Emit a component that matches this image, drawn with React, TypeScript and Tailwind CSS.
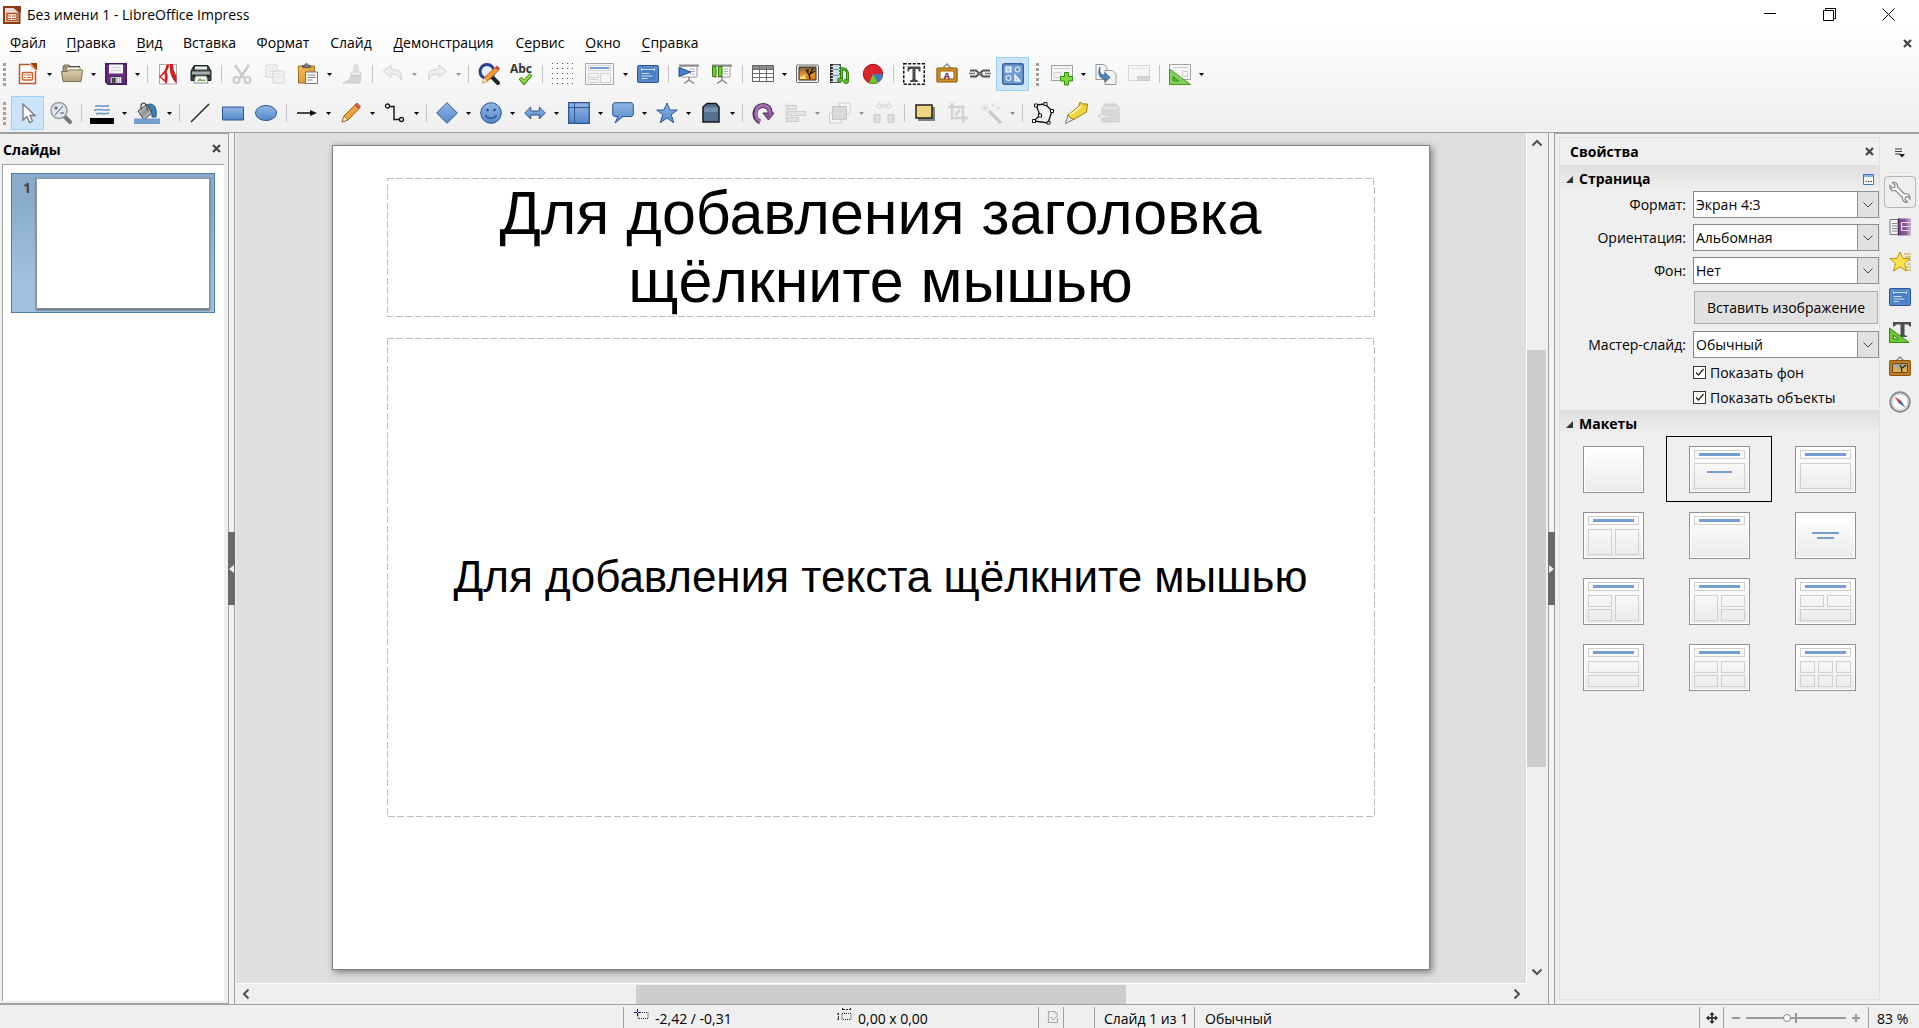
import clsx from "clsx"
import { useState } from "react"
import type { ReactNode } from "react"

type ToolItem = {
  icon?: string
  label?: string
  kind?: "button" | "sep" | "grip"
  menu?: boolean
  size?: "swatch" | "wide"
  active?: boolean
  disabled?: boolean
}

const menus = [
  { text: "Файл", key: 0, width: "w-14" },
  { text: "Правка", key: 0, width: "w-[70px]" },
  { text: "Вид", key: 0, width: "w-[47px]" },
  { text: "Вставка", key: 3, width: "w-[73px]" },
  { text: "Формат", key: 2, width: "w-[74px]" },
  { text: "Слайд", key: -1, width: "w-[62px]" },
  { text: "Демонстрация", key: 0, width: "w-[123px]" },
  { text: "Сервис", key: 1, width: "w-[70px]" },
  { text: "Окно", key: 0, width: "w-14" },
  { text: "Справка", key: 0, width: "w-[78px]" },
]

const icons: Record<string, ReactNode> = {
  newDoc: (
    <>
      <path d="M2.5 1.5h11l5 6v13h-16z" fill="#fff" stroke="#b5592f" strokeWidth="1.5" />
      <path d="M13.500 0H20v7.500z" fill="#a33e03" />
      <path d="M13 1.500v6h6" fill="#fbe3d5" stroke="#fff" />
      <rect x="5.500" y="9.500" width="10" height="7.500" rx="1" fill="#fff" stroke="#d0632a" strokeWidth="1.500" />
      <path d="M7 12h1.500M9.500 12H14M7 14.500h1.500M9.500 14.500H14" stroke="#d0632a" strokeWidth="1.200" />
    </>
  ),
  open: (
    <>
      <path d="M2 16V4l1-2h5l1 2h9v12z" fill="#a39473" stroke="#7f7150" />
      <path d="M6 4h13v8H6z" fill="#f5f5f2" stroke="#8d8468" />
      <path d="M8 3.500h11" stroke="#4a4a44" />
      <path d="M.5 8.500h6l2-1.500h13l-1.500 11.500H2z" fill="url(#tan)" stroke="#80724f" />
    </>
  ),
  save: (
    <>
      <path d="M.8.8h20.400v20.400H3L.8 19z" fill="#6a2b86" stroke="#43185a" strokeWidth="1.500" />
      <rect x="4" y="1.500" width="14" height="9" fill="#f7f7f7" />
      <path d="M6 4.500h10M6 7.500h10" stroke="#d4d4d4" strokeWidth="1.500" />
      <path d="M5 13.500h12v7H5z" fill="#b9bcb8" stroke="#4f2a62" />
      <path d="M7 15h3.500v5H7z" fill="#3f4a40" />
      <path d="M13.500 14v6M15.500 14v6" stroke="#eee" />
    </>
  ),
  pdf: (
    <>
      <path d="M2.500 1.500h17v19.500h-17z" fill="#fff" stroke="#a9a9a9" />
      <path d="M12.500 1c0 8 1.500 14 7 19.500V13C17 9 16 5 16 1z" fill="#cf1f20" />
      <path d="M9.500 1.500C9 5 8 7 6.500 9L3 13l4 .500c1 2 1.500 4 1.500 7h1.500c1-5 1-9-.500-12 1.500-2 2.500-4 2.500-7z" fill="#cf1f20" />
      <path d="M3 13.500 8.500 9v9.500z" fill="#fff" stroke="#d22" strokeWidth="1.500" />
    </>
  ),
  print: (
    <>
      <path d="M4 2.500h14l3 5.500v9.500H1V8z" fill="#3d4141" stroke="#212424" />
      <path d="M5 3.500h12v3H5z" fill="#e9eceb" />
      <path d="M2 8.500h18v3H2z" fill="#a9afaf" />
      <path d="M3 12h16v2H3z" fill="#151717" />
      <path d="M5.500 13h11l1.500 7H4z" fill="#f5f9f2" stroke="#858a85" />
      <path d="m7 18 3-3 2 2 2-1 2 2z" fill="#75ac56" />
    </>
  ),
  cut: (
    <>
      <path d="m4 2 9 13M18 2 9 15" stroke="#777" strokeWidth="2.500" />
      <circle cx="5.500" cy="17" r="3" fill="none" stroke="#777" strokeWidth="2" />
      <circle cx="16.500" cy="17" r="3" fill="none" stroke="#777" strokeWidth="2" />
    </>
  ),
  copy: (
    <>
      <path d="M2 2h11v12H2z" fill="#f1f1f1" stroke="#8c8c8c" />
      <path d="M4 5h7M4 8h7M4 11h4" stroke="#aaa" />
      <path d="M9 8h11v12H9z" fill="#f5f5f5" stroke="#8c8c8c" />
      <path d="M11 11h7M11 14h7M11 17h4" stroke="#999" />
    </>
  ),
  paste: (
    <>
      <path d="M1.500 3h16v17h-16z" fill="url(#orange)" stroke="#a86a15" />
      <path d="M5.500 4.500v-2h2C8 0 11 0 11.500 2.500h2v2z" fill="#7e7e7e" stroke="#555" />
      <path d="M8.500 9h12v11.500h-12z" fill="#fbfbfb" stroke="#777" />
      <path d="M10.500 12h8M10.500 14.500h8M10.500 17h5" stroke="#888" />
    </>
  ),
  brush: (
    <>
      <path d="M14 1.500c2-1 3 0 3 2v6h-4v-6z" fill="#bbb" stroke="#888" />
      <path d="M10 9h10v3.500H10z" fill="#d6d6d6" stroke="#888" />
      <path d="M10 12.500c0 4-4 6-8 7.500h17l1-7.500z" fill="#999" stroke="#777" />
    </>
  ),
  undo: <path d="M1.500 8 9 2v4c8 0 12 4 10 11-1-4-4-6-10-6v3.500z" fill="#ddd" stroke="#8a8a8a" />,
  redo: <path d="M20.500 8 13 2v4C5 6 1 10 3 17c1-4 4-6 10-6v3.500z" fill="#ddd" stroke="#8a8a8a" />,
  find: (
    <>
      <path d="m14 14 6 6" stroke="#222" strokeWidth="4" strokeLinecap="round" />
      <circle cx="9" cy="8.500" r="7" fill="#e6ecf5" stroke="#24408e" strokeWidth="3" />
      <path d="m4.500 20 1.500-5L17 4.500l3.500 3L9 18.500z" fill="#f29a31" stroke="#a35b0e" strokeWidth=".8" />
      <path d="m17 4.500 2-2 3 3-1.500 2z" fill="#e03c3c" />
      <path d="m4.500 20 1.500-5 3 3.500z" fill="#f4dcb5" />
    </>
  ),
  spell: (
    <>
      <text x="-1" y="10" fontSize="12" fontWeight="700" fontFamily="Open Sans, sans-serif" fill="#333">Abc</text>
      <path d="m9 15 4 4.500 7-8" fill="none" stroke="#3f8f10" strokeWidth="4" />
      <path d="m9.500 15.500 3.500 3.500 6.500-7" fill="none" stroke="#8ee04b" strokeWidth="2" />
    </>
  ),
  grid: <rect width="22" height="22" fill="url(#dots)" />,
  layout: (
    <>
      <path d="M.5.5h28v21H.5z" fill="#f5f5f5" stroke="#a8a8a8" />
      <path d="M3.500 2.500h22v5h-22zM3.500 10.500h10v4h-10zM15.500 10.500h10v9h-10zM3.500 16.500h10v3h-10z" fill="none" stroke="#d4d4d4" />
      <path d="M5 5h19" stroke="#729fcf" strokeWidth="2" />
    </>
  ),
  master: (
    <>
      <rect x=".5" y="2.500" width="21" height="17" rx="1" fill="#4a7fc4" stroke="#2b5693" />
      <path d="M2 4h18v14H2z" fill="none" stroke="#6f9bd4" strokeWidth=".8" />
      <path d="M4.500 6.500h13M4.500 5v3M17.500 5v3M4.500 10.500h8M4.500 13h11M4.500 15.500h6" stroke="#dbe8f8" strokeWidth=".9" />
    </>
  ),
  present: (
    <>
      <path d="M3 3h16v11H3z" fill="#fff" stroke="#9a9a9a" />
      <path d="M1 2.500h20" stroke="#888" strokeWidth="2" />
      <path d="M11 14v3l-5 3.500M11 17l5 3.500" fill="none" stroke="#888" strokeWidth="1.500" />
      <path d="M12 6h5M13 8.500h4M12 11h5" stroke="#aaa" />
      <path d="m1 4.500 12 4.500-12 4.500z" fill="#4b7fc5" stroke="#23508f" />
    </>
  ),
  presentFrom: (
    <>
      <path d="M3 3h16v11H3z" fill="#fff" stroke="#9a9a9a" />
      <path d="M1 2.500h20" stroke="#888" strokeWidth="2" />
      <path d="M11 14v3l-5 3.500M11 17l5 3.500" fill="none" stroke="#888" strokeWidth="1.500" />
      <path d="M13 6h4M13 8.500h4M13 11h4" stroke="#aaa" />
      <path d="M1.500 3.500H5v10H1.500zM7.500 3.500H11v10H7.500z" fill="#70d02f" stroke="#337d0b" />
    </>
  ),
  table: (
    <>
      <path d="M.5 2.500h21v16H.5z" fill="#fff" stroke="#606060" />
      <path d="M1 3h20v3.500H1z" fill="#8d8d8d" />
      <path d="M.5 6.500h21M.5 10.500h21M.5 14.500h21M7.500 2.500v16M14.500 2.500v16" stroke="#6d6d6d" />
    </>
  ),
  image: (
    <>
      <rect x=".5" y="2" width="22" height="17.500" rx="1" fill="#eee" stroke="#6c6c6c" />
      <path d="M3 4h17v13H3z" fill="url(#sunset)" stroke="#333" />
      <path d="m4 14 5-2 1 4H4z" fill="#ffe577" />
      <path d="M14 16c0-4-1-5-4-9M14 12c0-3 2-4 3-7M14 11l5-3M12 9V6" fill="none" stroke="#241707" strokeWidth="1.300" />
    </>
  ),
  media: (
    <>
      <path d="M1.500 1.500h10v18h-10z" fill="#cfdded" stroke="#555" />
      <path d="M2.500 1v19" stroke="#222" strokeWidth="2.500" strokeDasharray="2 1" />
      <path d="M11 1v12" stroke="#555" strokeWidth="1.500" strokeDasharray="2 1" />
      <path d="M4 6.500h6M4 12.500h6" stroke="#7e96b5" />
      <path d="M12.500 16.500v-11c3 0 6 2 6 5v7" fill="none" stroke="#2c8208" strokeWidth="3" />
      <path d="M12.500 16.500v-11c3 0 6 2 6 5v7" fill="none" stroke="#6bcf2d" />
      <ellipse cx="11" cy="17" rx="2.500" ry="2" fill="#5fc524" stroke="#2c8208" />
      <ellipse cx="17" cy="18.500" rx="2.500" ry="2" fill="#5fc524" stroke="#2c8208" />
    </>
  ),
  chart: (
    <>
      <circle cx="11" cy="11" r="9.700" fill="#d9252b" stroke="#a50f13" />
      <path d="M11 11h9.700a9.700 9.700 0 0 1-5 8.500z" fill="#4478c0" />
      <path d="m11 11 4.700 8.500a9.700 9.700 0 0 1-8.700.5z" fill="#6cc52f" />
    </>
  ),
  textBox: (
    <>
      <rect x=".75" y=".75" width="20.500" height="20.500" fill="#fff" stroke="#111" strokeWidth="1.500" strokeDasharray="3 1.500" />
      <path d="M4.500 3.500h13v5H16L15 6h-2.500v10.500l2.500 1v1.500H7v-1.500l2.500-1V6H7L6 8.500H4.500z" fill="#454a4b" />
    </>
  ),
  fontwork: (
    <>
      <path d="m7 5 4-4 4 4" fill="none" stroke="#888" strokeWidth="1.300" />
      <rect x="1" y="5" width="20" height="14" rx="1" fill="#d3912b" stroke="#8b5606" strokeWidth="1.200" />
      <path d="M4 8h14v8H4z" fill="#fff" stroke="#99600c" />
      <text x="7.500" y="15.500" fontSize="9.500" fontWeight="700" fontFamily="Open Sans, sans-serif" fill="#5c3566">A</text>
    </>
  ),
  chain: (
    <>
      <path d="M1 7.500h6l3.500 3 3.500-3h7M1 13.500h6l3.500-3 3.500 3h7" fill="none" stroke="#4c4f50" strokeWidth="1.800" />
      <path d="M0 10.500h6M8 10.500h6M16 10.500h6" stroke="#777" strokeWidth="1.500" />
      <path d="M1 6.500h5M15 6.500h5M1 14.800h5M15 14.800h5" stroke="#b5b5b5" />
    </>
  ),
  shapes: (
    <>
      <rect x=".7" y=".7" width="20.600" height="20.600" rx="2" fill="#6e9bd3" stroke="#3464a6" strokeWidth="1.400" />
      <path d="M4 4h5v5H4zM13 12v6h5z" fill="#aac8ec" stroke="#fff" strokeWidth="1.200" />
      <circle cx="15.500" cy="6.500" r="2.500" fill="none" stroke="#fff" />
      <circle cx="6.500" cy="15" r="2.500" fill="none" stroke="#fff" />
    </>
  ),
  addSlide: (
    <>
      <path d="M.5 2.500h21v15H.5z" fill="#f4f4f4" stroke="#a0a0a0" />
      <path d="M3 5.500h16M3 9.500h7v5H3z" fill="none" stroke="#d0d0d0" />
      <path d="M13.500 9.500h4v4h4V18h-4v4h-4v-4h-4v-4.500h4z" fill="#7fda3a" stroke="#2f8b0b" />
    </>
  ),
  dupSlide: (
    <>
      <path d="M1 1.500h8l3 3v12H1z" fill="#f5f5f5" stroke="#999" />
      <path d="M10 7.500h7.500l3.500 3.500v10.500H10z" fill="#f5f5f5" stroke="#999" />
      <path d="M5 4c-1 6 1 8 5 8V9.500l5 5-5 4.500v-3C5 16 2 11 5 4z" fill="#4d87b9" stroke="#275e8c" strokeWidth=".8" />
    </>
  ),
  delSlide: (
    <>
      <path d="M.5 2.500h21v15H.5z" fill="#f4f4f4" stroke="#999" />
      <path d="M3 5.500h16" stroke="#bbb" />
      <path d="M9.500 13.500h12v4h-12z" fill="#999" stroke="#777" />
    </>
  ),
  slideLayout: (
    <>
      <path d="M.5 1.500h21v15H.5z" fill="#f6f6f6" stroke="#a0a0a0" />
      <path d="M4 4.500h15M13.500 8.500h5v5h-5z" fill="none" stroke="#ccc" />
      <path d="M.5 6v15.500h21z" fill="#85cf5d" stroke="#3f9a18" />
      <path d="M4 13.500V18h6z" fill="#55ad2b" stroke="#3f9a18" />
    </>
  ),
  cursor: <path d="M6 2v16l4-3.500 2.500 6 3-1.500-2.500-5.500h5z" fill="#fff" stroke="#777" strokeWidth="1.300" />,
  zoomPan: (
    <>
      <path d="m14 14 6 6" stroke="#777" strokeWidth="4" strokeLinecap="round" />
      <circle cx="9" cy="8.500" r="8" fill="#dfe7f2" stroke="#999" strokeWidth="1.500" />
      <path d="M4 6h4M6 4v4M10 11h4M5 13l8-9" stroke="#556" />
    </>
  ),
  lineColor: (
    <>
      <path d="M4 4.500c4-2.500 7 1.500 14-1M3 8.500c5-3 8 1 16-1M5 12c4-2 7 1 13-1" fill="none" stroke="#6d97c6" strokeWidth="1.600" />
      <path d="M-1 16h24v6H-1z" fill="#000" />
    </>
  ),
  fillColor: (
    <>
      <path d="M13 2c6 0 8 4 7 13h-4c0-5 0-8-5-9z" fill="#3c82b4" stroke="#1d5a88" />
      <path d="m2 9 9-7 5 9-8 7z" fill="url(#silver)" stroke="#444" />
      <path d="M5 8V4c0-3 4-4 5-1l2 6" fill="none" stroke="#555" strokeWidth="1.300" />
      <path d="M-2 16.500h26V22H-2z" fill="#729fcf" />
    </>
  ),
  line: <path d="M2 20 20 2" stroke="#222" strokeWidth="1.400" />,
  rect: <path d="M.5 5h21v13H.5z" fill="url(#blue)" stroke="#2b5693" />,
  ellipse: <ellipse cx="11" cy="11" rx="10.500" ry="7.500" fill="url(#blue)" stroke="#2b5693" />,
  arrow: (
    <>
      <path d="M1 11h14" stroke="#111" strokeWidth="1.500" />
      <path d="m14 8 7 3-7 3z" fill="#111" />
    </>
  ),
  pencil: (
    <>
      <path d="m2 20 2-6L15 3l4 3.500L8 18z" fill="#f2a33c" stroke="#9e5b10" />
      <path d="m15 3 2-2 3.500 3.500L19 6.500z" fill="#e25a55" stroke="#9b2d2d" strokeWidth=".7" />
      <path d="m2 20 2-6 4 4z" fill="#f7dfbc" stroke="#7c5a2d" strokeWidth=".6" />
    </>
  ),
  connector: (
    <>
      <path d="M5 4.500h5v13h6" fill="none" stroke="#111" strokeWidth="1.400" />
      <circle cx="3.500" cy="4" r="2" fill="#fff" stroke="#111" strokeWidth="1.300" />
      <circle cx="17.500" cy="17.500" r="2" fill="#fff" stroke="#111" strokeWidth="1.300" />
    </>
  ),
  diamond: <path d="M11 .7 21.300 11 11 21.300.7 11z" fill="url(#blue)" stroke="#2b5693" />,
  smiley: (
    <>
      <circle cx="11" cy="11" r="10.300" fill="url(#blue)" stroke="#2b5693" />
      <circle cx="7.500" cy="8" r="1.300" fill="#244b84" />
      <circle cx="14.500" cy="8" r="1.300" fill="#244b84" />
      <path d="M5.500 13c2 4.500 9 4.500 11 0" fill="none" stroke="#244b84" strokeWidth="1.300" />
    </>
  ),
  doubleArrow: <path d="m.7 11 6-6v4h8.600V5l6 6-6 6v-4H6.700v4z" fill="url(#blue)" stroke="#2b5693" />,
  flow: (
    <>
      <path d="M.7.7h20.600v20.600H.7z" fill="url(#blue)" stroke="#2b5693" strokeWidth="1.300" />
      <path d="M6.500 1v20M1 5.500h20" stroke="#2b5693" />
    </>
  ),
  callout: <path d="M3 .7h16a2.500 2.500 0 0 1 2.300 2.300v9a2.500 2.500 0 0 1-2.300 2.500h-8L3 21l3-6.500H3A2.500 2.500 0 0 1 .7 12V3A2.500 2.500 0 0 1 3 .7z" fill="url(#blue)" stroke="#2b5693" />,
  star: <path d="m11 1 3 7h7.300l-6 4.700 2.400 8L11 16l-6.700 4.700 2.400-8L.7 8H8z" fill="url(#blue)" stroke="#2b5693" />,
  cube: (
    <>
      <path d="m3 5 4-3.500h9L19 5v15H3z" fill="#55718f" stroke="#101820" strokeWidth="1.500" />
      <path d="M4 5.500h14V10H4z" fill="#7490ad" />
    </>
  ),
  rotate: (
    <>
      <path d="M8 20C1 17 1 4 10.500 3.500c6 0 8 4 7.500 8" fill="none" stroke="#53285e" strokeWidth="5" />
      <path d="M11 11h11l-5.500 7z" fill="#8d5a99" stroke="#53285e" />
      <path d="M8 19.500C2 17 2 4 10.500 3.500c6 0 8 4 7.500 8.500" fill="none" stroke="#9f70ab" strokeWidth="3" />
    </>
  ),
  align: (
    <>
      <path d="M1 1v20" stroke="#888" />
      <path d="M2.500 3.500h9v4h-9zM2.500 9.500h18v4h-18zM2.500 15.500h11v4h-11z" fill="#ccc" stroke="#888" />
    </>
  ),
  arrange: (
    <>
      <path d="M10 1h11v11H10zM.5 11h12v10H.5z" fill="#fff" stroke="#888" />
      <path d="M3.500 4.500h14v13h-14z" fill="#ababab" stroke="#777" />
    </>
  ),
  distribute: (
    <>
      <path d="M1 12.500h6v8H1zM15 12.500h6v8h-6z" fill="#bbb" stroke="#888" />
      <path d="m3 4 4-3v2h8V1l4 3-4 3V5H7v2z" fill="#eee" stroke="#999" />
    </>
  ),
  shadow: (
    <>
      <path d="M4 5h17v14H4z" fill="#666" opacity=".8" />
      <path d="M2 3h16v13H2z" fill="#eed680" stroke="#222" strokeWidth="1.500" />
    </>
  ),
  crop: <path d="M5 1v15h16M1 5h15v16M13 8 8 13" fill="none" stroke="#999" strokeWidth="2.500" />,
  wand: (
    <>
      <path d="m9 9 12 12" stroke="#777" strokeWidth="3" />
      <path d="M5 2v8M1 6h8M2 3l6 6M8 3 2 9M13 1v4M11 3h4M18 4v3M16 6h4" stroke="#aaa" />
    </>
  ),
  points: (
    <>
      <path d="m4 3 9-1 7 7-4 12-14-2 6-6z" fill="none" stroke="#111" strokeWidth="1.300" />
      <path d="M2.500 2h3v3h-3zM12 .5h3v3h-3zM18.500 7.500h3v3h-3zM15 19.500h3v2.500h-3zM.5 17.500h3v3h-3zM6.500 12h3v3h-3z" fill="#fff" stroke="#111" />
    </>
  ),
  glue: (
    <>
      <path d="M.5 21.500 3 13l6.500 4z" fill="#eee" stroke="#777" />
      <path d="m3 13 11-9 1-4 3 2h4.500l-1 8-12 7c-3 0-5-1-6.500-4z" fill="#f2d640" stroke="#9f7d13" />
      <path d="M5 13 16 4.500" stroke="#fff3a0" strokeWidth="2" />
    </>
  ),
  extrude: (
    <>
      <path d="m4 6 3-4h11l3 4v14H4z" fill="#aaa" stroke="#888" />
      <path d="M5 6h15" stroke="#ddd" strokeWidth="1.500" />
      <path d="m0 14 5-3v2h7v3H5v2z" fill="#ddd" stroke="#888" />
    </>
  ),
  wrench: <path d="M3.500 1.500 6 4l-.5 2.500L3 7 1 4.500C0 8 3 10.500 6.500 9.500l7 7C13 20 16 22 18.500 21L16 18.500l.5-2.500 2.500-.5 2 2.500c1-3.500-2-6-5.500-5l-7-7C9 3 6.500.5 3.500 1.500z" fill="#fff" stroke="#888" strokeWidth="1.200" />,
  transition: (
    <>
      <path d="M1 3.500h8v15H1z" fill="#f4f4f4" stroke="#777" />
      <path d="M3 7.500h5M3 10h5M3 12.500h5M3 15h5" stroke="#888" />
      <path d="M9 2.500h13v17H9z" fill="url(#purpleFade)" />
      <path d="M9.500 2.500v17" stroke="#4f2159" />
      <path d="M12.500 6.500H21M12.500 14.500v-8M12.500 10.500H21M12.500 14.500H21" stroke="#eadff0" strokeWidth="1.200" />
    </>
  ),
  animation: (
    <>
      <path d="M15 3h7M16 6h6M18 9h4M18 13h4M17 16h5M16 19h6" stroke="#c9a227" />
      <path d="m11 1 3 6.500h7l-5.500 5 2 7.500-6.500-4-6.500 4 2-7.500-5.500-5h7z" fill="#fbe24b" stroke="#b89410" />
    </>
  ),
  styles: (
    <>
      <path d="M4 1h18v4.500h-1.500L19 3.500h-3.500V14l2.500 1v1H9v-1l2.500-1V3.500H7L5.500 5.500H4z" fill="#4a4f50" />
      <path d="M.5 7v14.500H20z" fill="#6cc636" stroke="#358d12" />
      <path d="M4.500 14v4h5z" fill="#b9e89c" stroke="#358d12" />
    </>
  ),
  gallery: (
    <>
      <path d="m7 5 4-4 4 4" fill="none" stroke="#888" strokeWidth="1.300" />
      <rect x=".7" y="4.700" width="20.600" height="14.600" rx="1" fill="#cb852b" stroke="#8b5606" strokeWidth="1.200" />
      <path d="M3.500 7.500h15v9h-15z" fill="url(#sunsetDay)" stroke="#6e4508" />
      <path d="M13 16c0-3 0-4-2-7M13 12l4-3" fill="none" stroke="#2d1c06" strokeWidth="1.200" />
    </>
  ),
  compass: (
    <>
      <circle cx="11" cy="11" r="9.700" fill="#fff" stroke="#8a8a8a" strokeWidth="2" />
      <circle cx="11" cy="11" r="7.700" fill="none" stroke="#ccc" />
      <path d="m5.500 5.500 7 4.500-2.500 2.500z" fill="#d93a3a" />
      <path d="m16.500 16.500-7-4.500 2.500-2.500z" fill="#3f74b8" />
    </>
  ),
}

const sep: ToolItem = { kind: "sep" }
const grip: ToolItem = { kind: "grip" }

const standardBar: ToolItem[] = [
  { icon: "newDoc", label: "Создать", menu: true },
  { icon: "open", label: "Открыть", menu: true },
  { icon: "save", label: "Сохранить", menu: true },
  sep,
  { icon: "pdf", label: "Экспорт в PDF" },
  { icon: "print", label: "Печать" },
  sep,
  { icon: "cut", label: "Вырезать", disabled: true },
  { icon: "copy", label: "Копировать", disabled: true },
  { icon: "paste", label: "Вставить", menu: true },
  { icon: "brush", label: "Копировать формат", disabled: true },
  sep,
  { icon: "undo", label: "Отменить", menu: true, disabled: true },
  { icon: "redo", label: "Вернуть", menu: true, disabled: true },
  sep,
  { icon: "find", label: "Найти и заменить" },
  { icon: "spell", label: "Орфография" },
  sep,
  { icon: "grid", label: "Показать сетку" },
  { icon: "layout", label: "Режим просмотра", menu: true, size: "wide" },
  { icon: "master", label: "Мастер-слайд" },
  sep,
  { icon: "present", label: "С первого слайда" },
  { icon: "presentFrom", label: "С текущего слайда" },
  sep,
  { icon: "table", label: "Таблица", menu: true },
  { icon: "image", label: "Изображение" },
  { icon: "media", label: "Аудио или видео" },
  { icon: "chart", label: "Диаграмма" },
  sep,
  { icon: "textBox", label: "Текстовое поле" },
  { icon: "fontwork", label: "Текст Fontwork" },
  { icon: "chain", label: "Гиперссылка" },
  { icon: "shapes", label: "Функции рисования", active: true },
  grip,
  { icon: "addSlide", label: "Создать слайд", menu: true },
  { icon: "dupSlide", label: "Дублировать слайд" },
  { icon: "delSlide", label: "Удалить слайд", disabled: true },
  sep,
  { icon: "slideLayout", label: "Макет слайда", menu: true },
]

const drawingBar: ToolItem[] = [
  { icon: "cursor", label: "Выделить", active: true },
  { icon: "zoomPan", label: "Масштаб" },
  sep,
  { icon: "lineColor", label: "Цвет линии", menu: true, size: "swatch" },
  { icon: "fillColor", label: "Цвет заливки", menu: true, size: "swatch" },
  sep,
  { icon: "line", label: "Линия" },
  { icon: "rect", label: "Прямоугольник" },
  { icon: "ellipse", label: "Эллипс" },
  sep,
  { icon: "arrow", label: "Линии и стрелки", menu: true },
  { icon: "pencil", label: "Кривые", menu: true },
  { icon: "connector", label: "Соединители", menu: true },
  sep,
  { icon: "diamond", label: "Основные фигуры", menu: true },
  { icon: "smiley", label: "Фигуры-символы", menu: true },
  { icon: "doubleArrow", label: "Блочные стрелки", menu: true },
  { icon: "flow", label: "Блок-схемы", menu: true },
  { icon: "callout", label: "Выноски", menu: true },
  { icon: "star", label: "Звёзды", menu: true },
  { icon: "cube", label: "Трёхмерные объекты", menu: true },
  sep,
  { icon: "rotate", label: "Повернуть" },
  { icon: "align", label: "Выравнивание", menu: true, disabled: true },
  { icon: "arrange", label: "Расположить", menu: true, disabled: true },
  { icon: "distribute", label: "Распределить", disabled: true },
  sep,
  { icon: "shadow", label: "Тень" },
  { icon: "crop", label: "Кадрировать", disabled: true },
  { icon: "wand", label: "Фильтр", menu: true, disabled: true },
  sep,
  { icon: "points", label: "Изменение узлов" },
  { icon: "glue", label: "Точки соединения" },
  { icon: "extrude", label: "Выдавливание", disabled: true },
]

const tabs = [
  { icon: "transition", label: "Смена слайдов" },
  { icon: "animation", label: "Анимация" },
  { icon: "master", label: "Мастер-слайды" },
  { icon: "styles", label: "Стили" },
  { icon: "gallery", label: "Галерея" },
  { icon: "compass", label: "Навигатор" },
]

// placeholder boxes of every layout: x, y, width, height
const T = [5, 4, 50, 8]
const layouts = [
  { name: "Пустой слайд", boxes: [], lines: [] },
  { name: "Титульный слайд", boxes: [T, [5, 17, 50, 25]], lines: [[10, 7, 41, 3], [18, 25, 25, 2]] },
  { name: "Заголовок, содержание", boxes: [T, [5, 17, 50, 25]], lines: [[10, 7, 41, 3]] },
  { name: "Заголовок и 2 содержания", boxes: [T, [5, 17, 23, 25], [32, 17, 23, 25]], lines: [[10, 7, 41, 3]] },
  { name: "Только заголовок", boxes: [T], lines: [[10, 7, 41, 3]] },
  { name: "По центру", boxes: [], lines: [[17, 20, 27, 2], [22, 25, 17, 2]] },
  { name: "2 содержания и содержание", boxes: [T, [5, 17, 23, 11], [5, 31, 23, 11], [32, 17, 23, 25]], lines: [[10, 7, 41, 3]] },
  { name: "Содержание и 2 содержания", boxes: [T, [5, 17, 23, 25], [32, 17, 23, 11], [32, 31, 23, 11]], lines: [[10, 7, 41, 3]] },
  { name: "2 содержания над содержанием", boxes: [T, [5, 17, 23, 11], [32, 17, 23, 11], [5, 31, 50, 11]], lines: [[10, 7, 41, 3]] },
  { name: "Содержание над содержанием", boxes: [T, [5, 17, 50, 11], [5, 31, 50, 11]], lines: [[10, 7, 41, 3]] },
  { name: "4 содержания", boxes: [T, [5, 17, 23, 11], [32, 17, 23, 11], [5, 31, 23, 11], [32, 31, 23, 11]], lines: [[10, 7, 41, 3]] },
  { name: "6 содержаний", boxes: [T, [5, 17, 14, 11], [23, 17, 14, 11], [41, 17, 14, 11], [5, 31, 14, 11], [23, 31, 14, 11], [41, 31, 14, 11]], lines: [[10, 7, 41, 3]] },
]

function Gradients() {
  return (
    <svg className="absolute size-0" aria-hidden="true">
      <defs>
        <linearGradient id="blue" x1="0" y1="0" x2="0" y2="1">
          <stop offset="0" stopColor="#93b7e3" />
          <stop offset="1" stopColor="#5488cd" />
        </linearGradient>
        <linearGradient id="page" x1="0" y1="0" x2="0" y2="1">
          <stop offset="0" stopColor="#fff" />
          <stop offset="1" stopColor="#ebebeb" />
        </linearGradient>
        <linearGradient id="tan" x1="0" y1="0" x2="0" y2="1">
          <stop offset="0" stopColor="#dccfb0" />
          <stop offset="1" stopColor="#b3a27a" />
        </linearGradient>
        <linearGradient id="orange" x1="0" y1="0" x2="1" y2="1">
          <stop offset="0" stopColor="#f0bd62" />
          <stop offset="1" stopColor="#d98e22" />
        </linearGradient>
        <linearGradient id="silver" x1="0" y1="0" x2="1" y2="1">
          <stop offset="0" stopColor="#f5f5f5" />
          <stop offset=".5" stopColor="#8c9396" />
          <stop offset="1" stopColor="#e4e4e4" />
        </linearGradient>
        <linearGradient id="sunset" x1="0" y1="0" x2="0" y2="1">
          <stop offset="0" stopColor="#7b5a3a" />
          <stop offset=".6" stopColor="#e89a2d" />
          <stop offset="1" stopColor="#d77b12" />
        </linearGradient>
        <linearGradient id="sunsetDay" x1="0" y1="0" x2="0" y2="1">
          <stop offset="0" stopColor="#8ea2ad" />
          <stop offset="1" stopColor="#f7b53a" />
        </linearGradient>
        <linearGradient id="purpleFade" x1="0" y1="0" x2="1" y2="0">
          <stop offset="0" stopColor="#75408a" />
          <stop offset=".6" stopColor="#8b5d97" />
          <stop offset="1" stopColor="#c9b3d0" />
        </linearGradient>
        <pattern id="dots" width="5" height="5" patternUnits="userSpaceOnUse">
          <rect width="1" height="1" fill="#555" />
        </pattern>
      </defs>
    </svg>
  )
}

function Icon({ name, wide }: { name: string; wide?: boolean }) {
  return (
    <svg
      className={clsx("h-[22px] shrink-0 overflow-visible", wide ? "w-[29px]" : "w-[22px]")}
      viewBox={wide ? "0 0 29 22" : "0 0 22 22"}
      aria-hidden="true"
    >
      {icons[name]}
    </svg>
  )
}

function CloseIcon() {
  return (
    <svg className="size-[9px]" viewBox="0 0 9 9" aria-hidden="true">
      <path d="m1 1 7 7M8 1 1 8" stroke="#444" strokeWidth="2.200" />
    </svg>
  )
}

function Chevron({ d }: { d: string }) {
  return (
    <svg className="size-3" viewBox="0 0 12 12" aria-hidden="true">
      <path d={d} fill="none" stroke="#505050" strokeWidth="2" />
    </svg>
  )
}

function Grip({ wide }: { wide?: boolean }) {
  return (
    <div className={clsx("flex shrink-0 flex-col gap-0.5", wide ? "w-4 items-center" : "w-[11px] pl-[3px]")}>
      {[0, 1, 2, 3, 4].map((i) => (
        <div key={i} className="h-[3px] w-[3px] bg-[#a0a0a0]" />
      ))}
    </div>
  )
}

function Toolbar({ items, label }: { items: ToolItem[]; label: string }) {
  return (
    <div role="toolbar" aria-label={label} className="flex h-[34px] items-center">
      <Grip />
      {items.map((item, i) => {
        if (item.kind === "grip") return <Grip key={i} wide />
        if (item.kind === "sep") {
          return (
            <div key={i} className="flex w-2 shrink-0 justify-center">
              <div className="h-[18px] w-px bg-[#c4c4c4]" />
            </div>
          )
        }
        return (
          <div key={i} className="flex shrink-0">
            <button
              type="button"
              aria-label={item.label}
              disabled={item.disabled}
              className={clsx(
                "flex h-[34px] items-center justify-center",
                item.size === "wide" ? "w-[41px]" : item.size === "swatch" ? "w-[34px]" : "w-[33px]",
                item.active && "border border-[#99d1ff] bg-[#cce4f9]",
                item.disabled && "opacity-35"
              )}
            >
              <Icon name={item.icon!} wide={item.size === "wide"} />
            </button>
            {item.menu && (
              <button
                type="button"
                aria-label={`${item.label}: меню`}
                disabled={item.disabled}
                className="flex w-[11px] items-center justify-center disabled:opacity-40"
              >
                <svg className="h-[3px] w-[5px]" viewBox="0 0 5 3" aria-hidden="true">
                  <path d="M0 0h5L2.500 3z" fill="#000" />
                </svg>
              </button>
            )}
          </div>
        )
      })}
    </div>
  )
}

function TitleBar() {
  return (
    <div className="flex h-7 items-center pl-[3px] pr-6 pt-px">
      <svg className="mr-1.5 size-[18px]" viewBox="0 0 18 18" aria-hidden="true">
        <path d="M1 1h10l5.500 5v11H1z" fill="#e7d9d3" stroke="#8a3a14" strokeWidth="2" />
        <path d="M11 0h7v7z" fill="#8a3a14" />
        <path d="M4 7.500h10v7H4z" fill="#fff" stroke="#b5501e" strokeWidth="1.500" />
        <path d="M5 10h3M9 10h4M5 12.500h3M9 12.500h4" stroke="#b5501e" />
      </svg>
      <span className="text-sm">Без имени 1 - LibreOffice Impress</span>
      <div className="ml-auto flex gap-[46px]">
        <button type="button" aria-label="Свернуть">
          <svg className="size-[13px]" viewBox="0 0 13 13"><path d="M0 5.500h12" stroke="#000" /></svg>
        </button>
        <button type="button" aria-label="Восстановить">
          <svg className="size-[13px]" viewBox="0 0 13 13">
            <path d="M.5 2.500h10v10H.5zM2.500 2.500v-2h10v10h-2" fill="none" stroke="#000" />
          </svg>
        </button>
        <button type="button" aria-label="Закрыть">
          <svg className="size-[13px]" viewBox="0 0 13 13"><path d="m.5.5 12 12M12.500.5l-12 12" stroke="#000" /></svg>
        </button>
      </div>
    </div>
  )
}

function MenuBar() {
  return (
    <nav className="flex h-7 items-center pr-[7px] pt-0.5" aria-label="Меню">
      {menus.map(({ text, key, width }) => (
        <button key={text} type="button" className={clsx("shrink-0 whitespace-nowrap text-center text-sm", width)}>
          {key < 0 ? text : (
            <>
              {text.slice(0, key)}
              <span className="underline underline-offset-3">{text[key]}</span>
              {text.slice(key + 1)}
            </>
          )}
        </button>
      ))}
      <button type="button" aria-label="Закрыть документ" className="ml-auto">
        <CloseIcon />
      </button>
    </nav>
  )
}

function Splitter({ side }: { side: "left" | "right" }) {
  return (
    <div className="flex w-[7px] shrink-0 items-center border-x border-[#a0a0a0] bg-[#f3f3f3]">
      <button type="button" aria-label="Скрыть панель" className="-mx-px flex h-[73px] w-[7px] shrink-0 items-center justify-center bg-[#696969]">
        <svg className="h-2 w-[5px]" viewBox="0 0 5 8">
          <path d={side === "left" ? "M5 0v8L0 4z" : "M0 0v8l5-4z"} fill="#efefef" />
        </svg>
      </button>
    </div>
  )
}

function SlidesPanel() {
  return (
    <aside className="flex w-[228px] shrink-0 flex-col border-y border-[#a0a0a0] pb-0.5">
      <div className="flex h-[30px] shrink-0 items-center justify-between pl-[3px] pr-[7px] pt-px">
        <h2 className="text-sm font-bold">Слайды</h2>
        <button type="button" aria-label="Закрыть" className="pb-0.5"><CloseIcon /></button>
      </div>
      <div className="ml-0.5 mr-1 flex-1 border-l border-t border-[#a0a0a0] bg-white px-2 pt-2">
        <button type="button" className="flex h-[140px] w-[204px] border border-[#4f7ba8] bg-linear-to-b from-[#8aaccb] from-20% to-[#a1c2e3] to-80% pt-1">
          <span className="w-6 pr-[5px] text-right text-sm font-bold text-[#444]">1</span>
          <span className="h-[131px] w-[174px] border border-[#8a94a0] bg-white shadow-[0_1px_2px_#555]" />
        </button>
      </div>
    </aside>
  )
}

function Placeholder({ className, children }: { className: string; children: ReactNode }) {
  return (
    <div className={clsx("relative flex items-center justify-center text-center", className)}>
      <svg className="absolute inset-0 size-full overflow-visible" aria-hidden="true">
        <rect width="100%" height="100%" fill="none" stroke="#bdbdbd" strokeDasharray="7 2.400" shapeRendering="crispEdges" />
      </svg>
      {children}
    </div>
  )
}

function Workspace() {
  return (
    <main className="ml-px flex min-w-0 flex-1 flex-col">
      <div className="flex min-h-0 flex-1">
        <div className="flex flex-1 border-b border-r border-white bg-[#dfdfdd] px-24 pb-[13px] pt-3">
          <div className="flex flex-1 flex-col border border-[#808080] bg-white pl-[54px] pr-[55px] pt-8 font-['Liberation_Sans',Arial,sans-serif] text-black shadow-[2px_2px_7px_#777]">
            <Placeholder className="h-[138px]">
              <h1 className="text-[61px] leading-[68px]">
                Для добавления заголовка
                <br />
                щёлкните мышью
              </h1>
            </Placeholder>
            <Placeholder className="mt-[22px] h-[478px]">
              <p className="text-[44px] leading-[50px]">Для добавления текста щёлкните мышью</p>
            </Placeholder>
          </div>
        </div>
        <div className="flex w-[21px] flex-col items-start pb-0.5 pr-px">
          <button type="button" aria-label="Вверх" className="flex h-5 w-5 items-center justify-center"><Chevron d="M1.500 8.500 6 4l4.500 4.500" /></button>
          <div className="grow-[197] basis-0" />
          <div className="w-[19px] grow-[418] basis-0 bg-[#cdcdcd]" />
          <div className="grow-[195] basis-0" />
          <button type="button" aria-label="Вниз" className="flex h-5 w-5 items-center justify-center"><Chevron d="M1.500 3.500 6 8l4.500-4.500" /></button>
        </div>
      </div>
      <div className="mr-[21px] flex h-5 shrink-0 items-center">
        <button type="button" aria-label="Влево" className="flex w-5 justify-center"><Chevron d="M8.500 1.500 4 6l4.500 4.500" /></button>
        <div className="grow-[380] basis-0" />
        <div className="h-[19px] grow-[489] basis-0 bg-[#cdcdcd]" />
        <div className="grow-[381] basis-0" />
        <button type="button" aria-label="Вправо" className="flex w-5 justify-center"><Chevron d="M3.500 1.500 8 6l-4.500 4.500" /></button>
      </div>
    </main>
  )
}

function SectionTitle({ children }: { children: ReactNode }) {
  return (
    <div className="flex h-[26px] items-center bg-linear-to-b from-[#dfdfdf] to-[#efefef] pl-1.5 pr-[5px] pt-0.5">
      <svg className="mr-1.5 size-[7px]" viewBox="0 0 7 7" aria-hidden="true"><path d="M7 0v7H0z" fill="#333" /></svg>
      {children}
    </div>
  )
}

function Field({ id, label, value }: { id: string; label: string; value: string }) {
  return (
    <div className="flex items-center">
      <label htmlFor={id} className="flex-1 pr-[7px] text-right text-sm">{label}</label>
      <div className="relative h-[27px] w-[186px]">
        <select id={id} className="size-full appearance-none border border-[#828790] bg-white pl-0.5 text-sm">
          <option>{value}</option>
        </select>
        <div className="pointer-events-none absolute inset-y-0 right-0 flex w-[22px] items-center justify-center border border-[#8e9297] bg-[#e1e1e1]">
          <svg className="h-1.5 w-2.5" viewBox="0 0 10 6"><path d="m.5.5 4.500 4.500L9.500.5" fill="none" stroke="#444" /></svg>
        </div>
      </div>
    </div>
  )
}

function Check({ id, label }: { id: string; label: string }) {
  return (
    <div className="ml-[133px] flex h-[25px] items-center gap-1">
      <span className="relative size-[13px]">
        <input id={id} type="checkbox" defaultChecked className="peer block size-[13px] appearance-none border border-[#333] bg-white" />
        <svg className="pointer-events-none absolute inset-0 hidden peer-checked:block" viewBox="0 0 13 13">
          <path d="M3 6.500 5.500 9l5-6" fill="none" stroke="#222" strokeWidth="1.200" />
        </svg>
      </span>
      <label htmlFor={id} className="text-sm">{label}</label>
    </div>
  )
}

function LayoutPreview({ boxes, lines }: { boxes: number[][]; lines: number[][] }) {
  return (
    <svg className="h-[47px] w-[61px]" viewBox="0 0 61 47" aria-hidden="true">
      <rect x=".5" y=".5" width="60" height="46" fill="#fff" stroke="#929292" />
      <rect x="2" y="2" width="57" height="43" fill="url(#page)" />
      {boxes.map(([x, y, w, h]) => (
        <rect key={`${x}-${y}`} x={x + 0.5} y={y + 0.5} width={w} height={h} fill="none" stroke="#cfcfcf" />
      ))}
      {lines.map(([x, y, w, h]) => (
        <rect key={`${x}-${y}`} x={x} y={y} width={w} height={h} fill="#729fcf" />
      ))}
    </svg>
  )
}

function Sidebar() {
  const [selected, setSelected] = useState(1)

  return (
    <aside className="flex w-[364px] shrink-0 border-t border-[#a0a0a0] pl-1">
      <div className="mb-1 mt-[3px] flex w-[321px] flex-col border border-[#e0e0e0]">
        <div className="flex h-[27px] items-center justify-between pl-2.5 pr-[5px]">
          <h2 className="text-sm font-bold">Свойства</h2>
          <button type="button" aria-label="Закрыть"><CloseIcon /></button>
        </div>
        <SectionTitle>
          <h3 className="text-sm font-bold">Страница</h3>
          <button type="button" aria-label="Дополнительные параметры" className="ml-auto">
            <svg className="size-[11px]" viewBox="0 0 11 11">
              <path d="M.5.5h10v10H.5z" fill="#fff" stroke="#3d74bb" />
              <path d="M1 2h9" stroke="#82b0ea" strokeWidth="2" />
              <path d="M2.500 7.500h1.500M5 7.500h1.500M7.500 7.500H9" stroke="#333" />
            </svg>
          </button>
        </SectionTitle>
        <div className="flex flex-col gap-1.5">
          <Field id="format" label="Формат:" value="Экран 4:3" />
          <Field id="orientation" label="Ориентация:" value="Альбомная" />
          <Field id="background" label="Фон:" value="Нет" />
          <button type="button" className="my-px ml-auto mr-px h-[33px] w-[184px] border border-[#adadad] bg-[#e1e1e1] text-sm">
            Вставить изображение
          </button>
          <Field id="master" label="Мастер-слайд:" value="Обычный" />
        </div>
        <div className="pt-0.5">
          <Check id="show-background" label="Показать фон" />
          <Check id="show-objects" label="Показать объекты" />
        </div>
        <SectionTitle>
          <h3 className="text-sm font-bold">Макеты</h3>
        </SectionTitle>
        <div className="mr-px grid grid-cols-3">
          {layouts.map((layout, i) => (
            <button
              key={layout.name}
              type="button"
              aria-label={layout.name}
              aria-pressed={selected === i}
              onClick={() => setSelected(i)}
              className={clsx("flex h-[66px] items-center justify-center", selected === i && "border border-black")}
            >
              <LayoutPreview boxes={layout.boxes} lines={layout.lines} />
            </button>
          ))}
        </div>
      </div>
      <div className="flex flex-1 flex-col items-center pt-3">
        <button type="button" aria-label="Параметры боковой панели" className="flex h-[14px] items-center">
          <svg className="h-2.5 w-2.5" viewBox="0 0 10 10">
            <path d="M0 1h7M0 3.500h7M0 6h5" stroke="#345" />
            <path d="M4 6h6L7 9.500z" fill="#111" />
          </svg>
        </button>
        <div className="mb-[3px] mt-3 h-px w-6 bg-[#ddd]" />
        <button type="button" aria-label="Свойства" className="mb-2 flex size-8 items-center justify-center rounded border border-[#b5b5b5]">
          <Icon name="wrench" />
        </button>
        <div className="flex flex-col gap-[13px]">
          {tabs.map((tab) => (
            <button key={tab.icon} type="button" aria-label={tab.label}>
              <Icon name={tab.icon} />
            </button>
          ))}
        </div>
      </div>
    </aside>
  )
}

function StatusBar() {
  const [zoom, setZoom] = useState(40)

  return (
    <footer className="flex h-6 shrink-0 items-stretch border-t border-[#a0a0a0] pt-0.5 text-sm leading-6">
      <div className="w-[623px]" />
      <div className="flex w-[415px] border-l border-[#a0a0a0] pl-2.5">
        <svg className="mr-1.5 size-[15px]" viewBox="0 0 15 15" aria-hidden="true">
          <path d="M0 5.500h7M3.500 2v7" stroke="#00c" strokeDasharray="3 1" />
          <path d="M4 5.500h10v6H4z" fill="none" stroke="#222" strokeDasharray="1 1" />
        </svg>
        <span className="w-[182px]">-2,42 / -0,31</span>
        <svg className="mr-1.5 size-[15px]" viewBox="0 0 15 15" aria-hidden="true">
          <path d="M5 6.500h9v6H5z" fill="none" stroke="#222" strokeDasharray="1 1" />
          <path d="M1.500 6v7M0 7h3M0 12h3M5.500 1v3M13.500 1v3M6 2.500h7" stroke="#222" strokeDasharray="2 1" />
        </svg>
        <span>0,00 x 0,00</span>
      </div>
      <div className="w-[25px] border-l border-[#a0a0a0] pl-2">
        <svg className="mt-1 size-3" viewBox="0 0 12 12" aria-hidden="true">
          <path d="M10.500 7v4.500h-9V.5h6l3 3" fill="none" stroke="#aaa" strokeWidth="1.200" />
          <path d="m4 6 2 3 5-5" fill="none" stroke="#999" />
        </svg>
      </div>
      <div className="w-[31px] border-l border-[#a0a0a0]" />
      <div className="w-[100px] whitespace-nowrap border-l border-[#a0a0a0] pl-[9px]">Слайд 1 из 1</div>
      <div className="flex-1 border-l border-[#a0a0a0] pl-2.5">Обычный</div>
      <button type="button" aria-label="По размеру слайда" className="flex w-6 items-center justify-center border-l border-[#a0a0a0]">
        <svg className="size-3" viewBox="0 0 12 12">
          <path d="M6 1v10M1 6h10" stroke="#222" strokeWidth="1.500" />
          <path d="m6 0 2.500 3h-5zM6 12l2.500-3h-5zM0 6l3-2.500v5zM12 6 9 3.500v5z" fill="#222" />
        </svg>
      </button>
      <div className="flex w-[145px] items-center justify-center gap-1.5 border-l border-[#a0a0a0]">
        <button type="button" aria-label="Уменьшить">
          <svg className="block size-2" viewBox="0 0 8 8"><path d="M0 4h8" stroke="#999" strokeWidth="2" /></svg>
        </button>
        <div className="relative flex w-[100px] items-center">
          <div className="absolute left-1/2 h-2.5 w-0.5 -translate-x-px bg-[#999]" />
          <input
            type="range"
            aria-label="Масштаб"
            value={zoom}
            onChange={(e) => setZoom(Number(e.target.value))}
            className="relative h-2 w-full appearance-none bg-transparent [&::-webkit-slider-runnable-track]:h-0.5 [&::-webkit-slider-runnable-track]:bg-[#999] [&::-webkit-slider-thumb]:-mt-[3px] [&::-webkit-slider-thumb]:size-2 [&::-webkit-slider-thumb]:appearance-none [&::-webkit-slider-thumb]:rounded-full [&::-webkit-slider-thumb]:border [&::-webkit-slider-thumb]:border-[#888] [&::-webkit-slider-thumb]:bg-white"
          />
        </div>
        <button type="button" aria-label="Увеличить">
          <svg className="block size-2" viewBox="0 0 8 8"><path d="M0 4h8M4 0v8" stroke="#999" strokeWidth="2" /></svg>
        </button>
      </div>
      <div className="w-[51px] whitespace-nowrap border-l border-[#a0a0a0] pl-2">83 %</div>
    </footer>
  )
}

export default function App() {
  return (
    <div className="flex h-screen flex-col overflow-hidden bg-[#efefef] font-['Open_Sans','Noto_Sans',sans-serif] text-black">
      <Gradients />
      <header className="shrink-0 border-b border-[#a0a0a0] bg-linear-to-b from-white from-20% to-[#efefef]">
        <TitleBar />
        <MenuBar />
        <div className="pb-0.5 pt-px">
          <Toolbar items={standardBar} label="Стандартная" />
          <div className="pt-[5px]">
            <Toolbar items={drawingBar} label="Рисование" />
          </div>
        </div>
      </header>
      <div className="flex min-h-0 flex-1">
        <SlidesPanel />
        <Splitter side="left" />
        <Workspace />
        <Splitter side="right" />
        <Sidebar />
      </div>
      <StatusBar />
    </div>
  )
}
